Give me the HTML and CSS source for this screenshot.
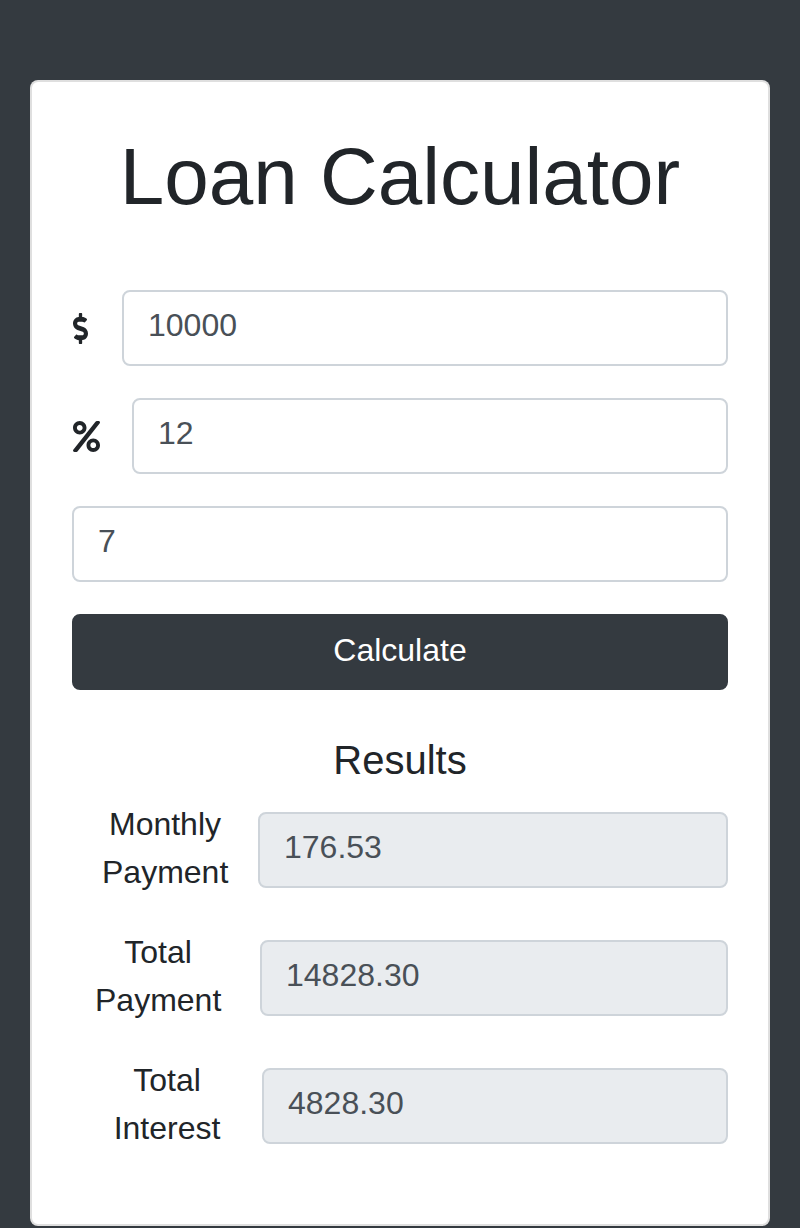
FILE: index.html
```html
<!DOCTYPE html>
<html lang="en">
<head>
<meta charset="utf-8">
<title>Loan Calculator</title>
<link rel="stylesheet" href="styles.css">
</head>
<body>
<div class="page">
  <div class="card">
    <h1 class="title">Loan Calculator</h1>
    <form class="form">
      <div class="field">
        <span class="icon icon-dollar">
          <svg viewBox="0 0 288 512" width="15" height="31" preserveAspectRatio="none"><path fill="currentColor" d="M209.2 233.4l-108-31.6C88.7 198.2 80 186.5 80 173.5c0-16.3 13.2-29.5 29.5-29.5h66.3c12.2 0 24.2 3.7 34.2 10.5 6.1 4.1 14.3 3.1 19.5-2l34.8-34c7.1-6.9 6.1-18.4-1.8-24.5C238 74.8 207.4 64.1 176 64V16c0-8.8-7.2-16-16-16h-32c-8.8 0-16 7.2-16 16v48h-2.5C45.8 64-5.4 118.7.5 183.6c4.2 46.1 39.4 83.6 83.8 96.6l102.5 30c12.5 3.7 21.2 15.3 21.2 28.3 0 16.3-13.2 29.5-29.5 29.5h-66.3C100 368 88 364.3 78 357.5c-6.1-4.1-14.3-3.1-19.5 2l-34.8 34c-7.1 6.9-6.1 18.4 1.8 24.5 24.5 19.2 55.1 29.9 86.5 30v48c0 8.8 7.2 16 16 16h32c8.8 0 16-7.2 16-16v-48.2c46.6-.9 90.3-28.6 105.7-72.7 21.5-61.6-14.6-124.8-72.5-141.7z"/></svg>
        </span>
        <input class="control" type="text" value="10000">
      </div>
      <div class="field">
        <span class="icon icon-percent">
          <svg viewBox="0 0 448 512" width="27" height="31"><path fill="currentColor" d="M112 224c61.9 0 112-50.1 112-112S173.9 0 112 0 0 50.1 0 112s50.1 112 112 112zm0-160c26.5 0 48 21.5 48 48s-21.5 48-48 48-48-21.5-48-48 21.5-48 48-48zm224 224c-61.9 0-112 50.1-112 112s50.1 112 112 112 112-50.1 112-112-50.1-112-112-112zm0 160c-26.5 0-48-21.5-48-48s21.5-48 48-48 48 21.5 48 48-21.5 48-48 48zM392.3.2l31.6-.1c19.4-.1 30.9 21.8 19.7 37.8L77.4 501.6a23.95 23.95 0 0 1-19.6 10.2l-33.4.1c-19.5 0-30.9-21.9-19.7-37.8l368-463.7z"/></svg>
        </span>
        <input class="control" type="text" value="12">
      </div>
      <div class="field">
        <input class="control" type="text" value="7">
      </div>
      <button class="btn" type="button">Calculate</button>
    </form>
    <h5 class="results-title">Results</h5>
    <div class="result-row">
      <span class="result-label label-monthly">Monthly Payment</span>
      <input class="control readonly" type="text" value="176.53" readonly>
    </div>
    <div class="result-row">
      <span class="result-label label-total">Total Payment</span>
      <input class="control readonly" type="text" value="14828.30" readonly>
    </div>
    <div class="result-row">
      <span class="result-label label-interest">Total Interest</span>
      <input class="control readonly" type="text" value="4828.30" readonly>
    </div>
  </div>
</div>
</body>
</html>
```

FILE: styles.css
```css
* { box-sizing: border-box; }

html, body {
  margin: 0;
  padding: 0;
  background: #343a40;
}

body {
  font-family: "Liberation Sans", Arial, sans-serif;
  font-size: 32px;
  line-height: 1.5;
  color: #212529;
}

.page {
  padding: 80px 30px 0;
}

.card {
  background: #fff;
  border: 2px solid rgba(0, 0, 0, 0.125);
  border-radius: 8px;
  padding: 40px;
}

.title {
  margin: 7px 0 65px;
  font-size: 80px;
  font-weight: 400;
  line-height: 1.2;
  text-align: center;
}

.form {
  margin: 0;
}

.field {
  display: flex;
  align-items: center;
  margin-bottom: 32px;
}

.icon {
  display: flex;
  align-items: center;
  justify-content: flex-start;
  margin-right: 32px;
  color: #212529;
}

.icon-dollar {
  width: 18px;
  padding-left: 1px;
}

.icon-percent {
  width: 28px;
  padding-left: 1px;
}

.icon svg {
  display: block;
}

.control {
  flex: 1 1 auto;
  min-width: 0;
  width: 1%;
  height: 76px;
  padding: 9px 24px 15px;
  font-family: inherit;
  font-size: 32px;
  line-height: 48px;
  color: #495057;
  background: #fff;
  border: 2px solid #ced4da;
  border-radius: 8px;
  outline: none;
}

.control.readonly {
  background: #e9ecef;
}

.btn {
  display: block;
  width: 100%;
  height: 76px;
  margin: 0;
  padding: 10px 24px 14px;
  font-family: inherit;
  font-size: 32px;
  line-height: 48px;
  color: #fff;
  background: #343a40;
  border: 2px solid #343a40;
  border-radius: 8px;
}

.results-title {
  margin: 46px 0 16px;
  font-size: 40px;
  font-weight: 400;
  line-height: 1.2;
  text-align: center;
}

.result-row {
  display: flex;
  align-items: flex-start;
  margin-bottom: 32px;
}

.result-row .control {
  margin-top: 12px;
}

.result-label {
  flex: 0 0 auto;
  text-align: center;
  line-height: 48px;
}

.label-monthly {
  width: 186px;
  padding: 0 30px;
}

.label-total {
  width: 188px;
  padding: 0 39px 0 23px;
}

.label-interest {
  width: 190px;
  padding: 0 30px;
}
```
